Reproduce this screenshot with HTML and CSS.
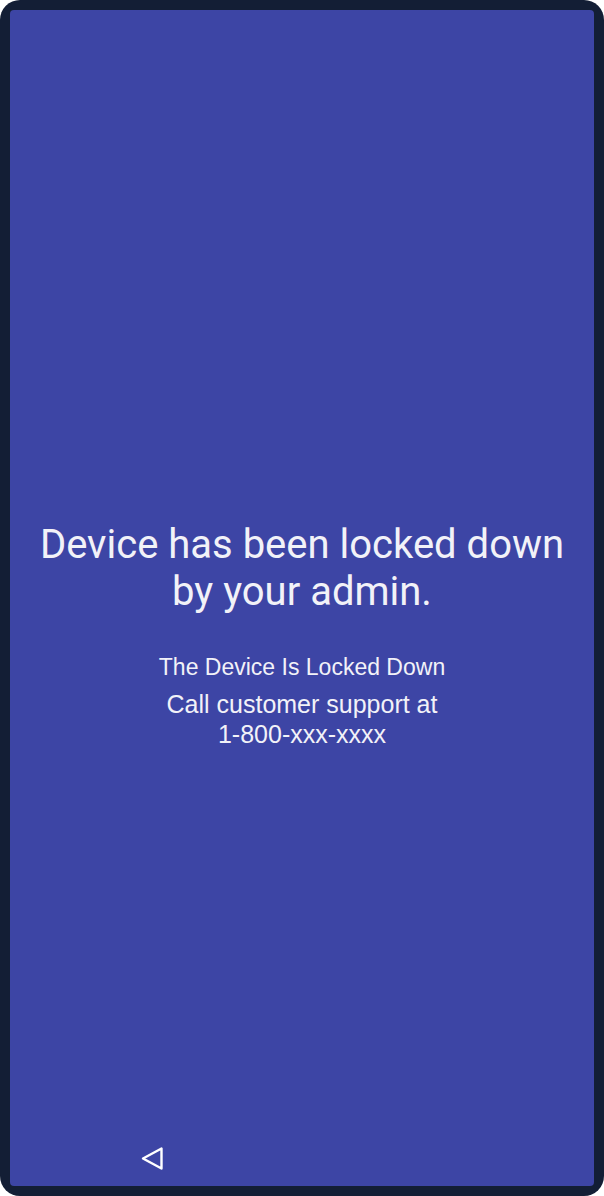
FILE: index.html
```html
<!DOCTYPE html>
<html>
<head>
<meta charset="utf-8">
<link rel="stylesheet" href="styles.css">
</head>
<body>
<div class="frame">
  <div class="screen">
    <div class="content">
      <h1 class="title">Device has been locked down<br>by your admin.</h1>
      <p class="sub">The Device Is Locked Down</p>
      <p class="support">Call customer support at<br>1-800-xxx-xxxx</p>
    </div>
    <div class="navbar">
      <svg class="back" width="28" height="28" viewBox="0 0 28 28">
        <path d="M23.5 4.5 L23.5 24.5 L5 14.5 Z" fill="none" stroke="#ffffff" stroke-width="2.4" stroke-linejoin="round"/>
      </svg>
    </div>
  </div>
</div>
</body>
</html>
```

FILE: styles.css
```css
html, body {
  margin: 0;
  padding: 0;
  background: #ffffff;
}
.frame {
  width: 604px;
  height: 1196px;
  box-sizing: border-box;
  background: #131e35;
  border-radius: 20px;
  padding: 10px;
}
.screen {
  height: 100%;
  background: #3d45a5;
  border-radius: 4px;
  display: flex;
  flex-direction: column;
}
.content {
  flex: 1;
  display: flex;
  flex-direction: column;
  align-items: center;
  text-align: center;
  color: #f2f2f8;
  padding-top: 511px;
}
.title {
  font-family: Roboto, sans-serif;
  font-weight: 400;
  font-size: 40px;
  line-height: 47px;
  margin: 0 0 37px 0;
  white-space: nowrap;
}
.sub {
  font-family: "Liberation Sans", Arial, sans-serif;
  font-size: 23px;
  line-height: 30px;
  margin: 0 0 7px 0;
}
.support {
  font-family: "Liberation Sans", Arial, sans-serif;
  font-size: 25px;
  line-height: 30px;
  margin: 0;
}
.navbar {
  height: 42px;
  padding-left: 128px;
}
.back {
  display: block;
}
```
